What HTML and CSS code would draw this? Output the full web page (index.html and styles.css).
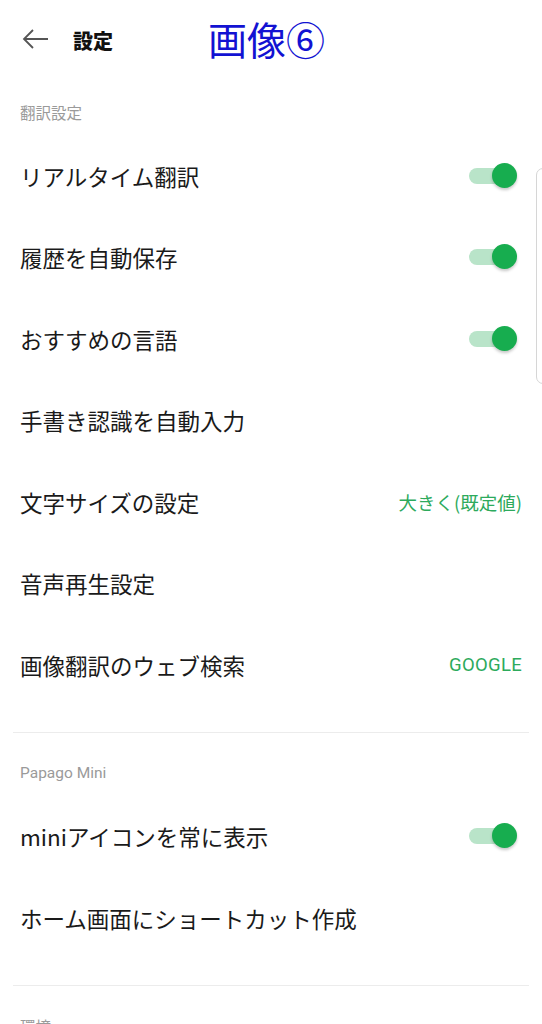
FILE: index.html
```html
<!DOCTYPE html>
<html lang="ja">
<head>
  <meta charset="UTF-8">
  <meta name="viewport" content="width=device-width, initial-scale=1.0">
  <link rel="stylesheet" href="styles.css">
</head>
<body>
  <header class="top-bar">
    <svg class="back" width="28" height="22" viewBox="0 0 28 22">
      <path d="M26 11H2M11 2L2 11l9 9" fill="none" stroke="#555" stroke-width="1.8"/>
    </svg>
    <span class="title">設定</span>
    <span class="stamp">画像⑥</span>
  </header>

  <section class="group first">
    <p class="group-label">翻訳設定</p>
    <div class="row"><span>リアルタイム翻訳</span><span class="toggle"></span></div>
    <div class="row"><span>履歴を自動保存</span><span class="toggle"></span></div>
    <div class="row"><span>おすすめの言語</span><span class="toggle"></span></div>
    <div class="row"><span>手書き認識を自動入力</span></div>
    <div class="row"><span>文字サイズの設定</span><span class="value">大きく(既定値)</span></div>
    <div class="row"><span>音声再生設定</span></div>
    <div class="row"><span>画像翻訳のウェブ検索</span><span class="value latin">GOOGLE</span></div>
  </section>

  <section class="group">
    <p class="group-label latin">Papago Mini</p>
    <div class="row"><span>miniアイコンを常に表示</span><span class="toggle"></span></div>
    <div class="row"><span>ホーム画面にショートカット作成</span></div>
  </section>

  <section class="group">
    <p class="group-label">環境</p>
  </section>

  <div class="edge-handle"></div>
</body>
</html>
```

FILE: styles.css
```css
:root {
  --green: #17ad4f;
  --green-light: #b9e4c9;
  --text: #1a1a1a;
  --muted: #9a9a9a;
}

body {
  margin: 0;
  font-family: "Noto Sans CJK JP", "Noto Sans", sans-serif;
  color: var(--text);
  background-color: #fff;
  overflow: hidden;
}

.latin {
  font-family: Roboto, "Noto Sans CJK JP", sans-serif;
}

.top-bar {
  display: flex;
  align-items: center;
  height: 80px;
  padding-left: 22px;
}

.back {
  display: block;
  margin-top: -2px;
}

.title {
  margin-left: 23px;
  font-size: 20px;
  font-weight: 900;
  color: #111;
}

.stamp {
  margin-left: 95px;
  font-size: 39px;
  color: #1212d2;
  line-height: 1;
  margin-top: -3px;
}

.group {
  margin: 0 13px;
  padding-bottom: 26px;
  border-bottom: 1px solid #ececec;
}

.group:last-of-type {
  border-bottom: none;
}

.group-label {
  margin: 0;
  padding: 30px 7px 13px;
  font-size: 15.5px;
  line-height: 20px;
  color: var(--muted);
}

.group.first .group-label {
  padding-top: 22px;
  padding-bottom: 13px;
}

.row {
  display: flex;
  align-items: center;
  justify-content: space-between;
  height: 81.5px;
  padding: 0 7px;
  font-size: 22.5px;
}

.value {
  font-size: 18.5px;
  color: #2daa5c;
}

.value.latin {
  font-size: 18.5px;
  letter-spacing: 0.3px;
}

.toggle {
  position: relative;
  width: 44px;
  height: 16px;
  margin-right: 9px;
  border-radius: 8px;
  background-color: var(--green-light);
}

.toggle::after {
  content: "";
  position: absolute;
  right: -4px;
  top: -5px;
  width: 25px;
  height: 25px;
  border-radius: 50%;
  background-color: var(--green);
  box-shadow: 0 2px 3px rgba(0, 0, 0, 0.22);
}

.edge-handle {
  position: absolute;
  left: 536px;
  top: 168px;
  width: 14px;
  height: 214px;
  border: 1px solid #d6d6d6;
  border-radius: 7px;
  background-color: #fff;
}
```
